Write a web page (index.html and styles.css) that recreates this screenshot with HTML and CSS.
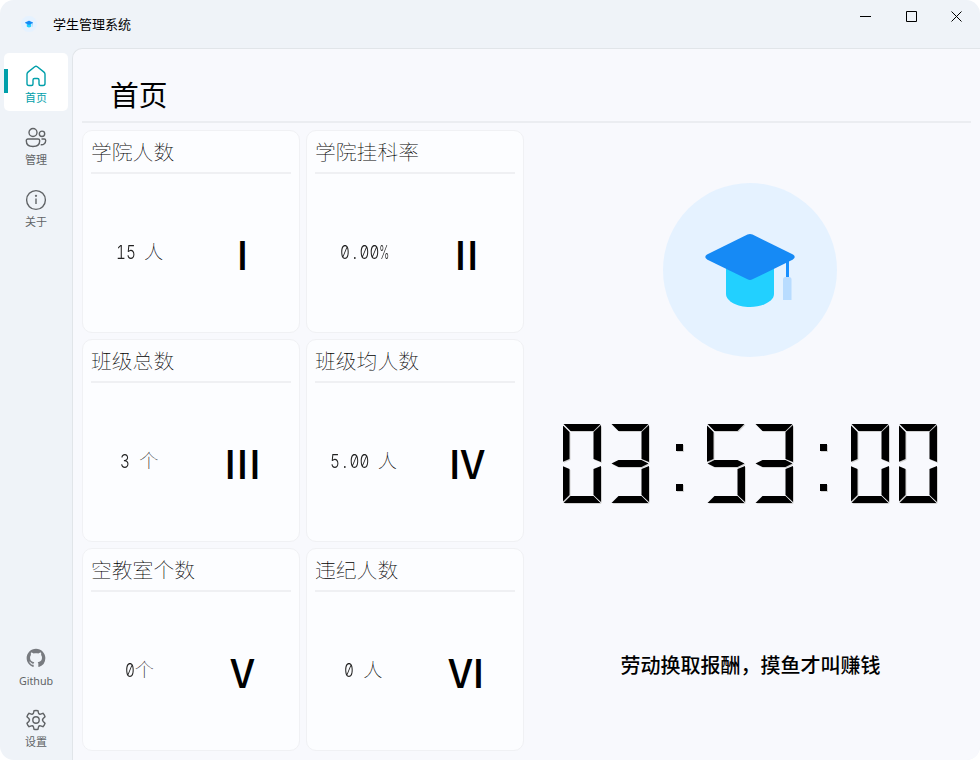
FILE: index.html
```
<!DOCTYPE html>
<html lang="zh-CN">
<head>
<meta charset="utf-8">
<title>学生管理系统</title>
<link rel="stylesheet" href="styles.css">
</head>
<body>
<svg width="0" height="0" class="defs" aria-hidden="true">
  <symbol id="cap" viewBox="0 0 174 174">
    <circle cx="87" cy="87" r="87" fill="#e5f2ff"/>
    <path d="M63 70h48v41c0 7-11 13-24 13s-24-6-24-13z" fill="#22d0ff"/>
    <path d="M123 70h3v28h-3z" fill="#1890ff"/>
    <path d="M122.500 94h3.500q2.500 0 2.500 2.500V117h-8.500V96.500q0-2.500 2.500-2.500z" fill="#b8dcff"/>
    <path d="M84.500 51.500q2.500-1.200 5 0L129.500 71.300q4.500 2.700 0 5.400L89.500 96.300q-2.500 1.200-5 0L44.500 76.700q-4.500-2.700 0-5.400z" fill="#168af5"/>
  </symbol>
</svg>
<div class="window">
  <header class="titlebar">
    <svg class="logo"><use href="#cap"/></svg>
    <span class="app-name">学生管理系统</span>
    <div class="controls">
      <svg viewBox="0 0 12 12"><path d="M0 6.500h11"/></svg>
      <svg viewBox="0 0 12 12"><path d="M.5 1.500h10v10H.5z"/></svg>
      <svg viewBox="0 0 12 12"><path d="M.5 1.500l10 10M10.500 1.500l-10 10"/></svg>
    </div>
  </header>
  <nav class="sidebar">
    <a class="item active"><svg viewBox="0 0 22 22"><path d="M2 9.200c0-.9.400-1.600 1-2.100l6.700-5.400q1.300-1 2.600 0L19 7.100c.6.500 1 1.200 1 2.100v9.300q0 2-2 2h-2.500q-1.500 0-1.500-1.500v-4q0-1.500-1.500-1.500h-3Q8 13.500 8 15v4q0 1.500-1.500 1.500H4q-2 0-2-2z"/></svg><span>首页</span></a>
    <a class="item"><svg viewBox="0 0 22 22"><circle cx="8" cy="5.500" r="4"/><circle cx="17" cy="6.800" r="2.700"/><path d="M3 12h10q1.700 0 1.700 1.700c0 3.900-2.600 5.800-6.700 5.800s-6.700-1.900-6.700-5.800Q1.300 12 3 12zM16.500 12h2.700q1.500 0 1.500 1.500c0 2.900-2 4.500-5 4.300"/></svg><span>管理</span></a>
    <a class="item"><svg viewBox="0 0 22 22"><circle cx="11" cy="11" r="9.400"/><path d="M11 9.500V15"/><circle cx="11" cy="6.800" r=".45"/></svg><span>关于</span></a>
    <a class="item push"><svg viewBox="-1.400 -1.400 18.800 18.800"><path class="solid" d="M8 0C3.580 0 0 3.580 0 8c0 3.540 2.290 6.530 5.470 7.590.4.070.55-.17.55-.38 0-.19-.01-.82-.01-1.490-2.010.37-2.530-.49-2.690-.94-.09-.23-.48-.94-.82-1.130-.28-.15-.68-.52-.01-.53.63-.01 1.080.58 1.230.82.720 1.210 1.870.87 2.330.66.070-.52.280-.87.510-1.070-1.780-.2-3.640-.89-3.640-3.950 0-.87.310-1.590.82-2.150-.08-.2-.36-1.020.08-2.120 0 0 .67-.21 2.200.82.640-.18 1.320-.27 2-.27s1.360.09 2 .27c1.530-1.040 2.200-.82 2.200-.82.440 1.100.16 1.920.08 2.120.51.560.82 1.270.82 2.150 0 3.070-1.870 3.750-3.650 3.950.29.250.54.730.54 1.480 0 1.070-.01 1.930-.01 2.200 0 .21.150.46.550.38A8.010 8.010 0 0 0 16 8c0-4.420-3.580-8-8-8z"/></svg><span>Github</span></a>
    <a class="item"><svg viewBox="0 0 22 22"><circle cx="11" cy="11" r="3.200"/><path d="M9 1.800q2-.5 4 0l.6 2.500q.5 1.300 2 .8l2.400-.8q1.500 1.600 2 3.500L18.200 9.600q-1.400 1.400 0 2.800L20 14.200q-.5 1.900-2 3.500l-2.400-.8q-1.500-.5-2 .8l-.6 2.500q-2 .5-4 0l-.6-2.500q-.5-1.300-2-.8l-2.400.8q-1.500-1.600-2-3.500l1.800-1.800q1.400-1.400 0-2.800L2 7.800q.5-1.900 2-3.500l2.400.8q1.500.5 2-.8z"/></svg><span>设置</span></a>
  </nav>
  <main class="content">
    <h1>首页</h1>
    <div class="body">
      <section class="cards">
        <article class="card"><h2>学院人数</h2><div class="row"><div class="value"><span class="num" style="--n:2">15</span> 人</div><div class="roman">I</div></div></article>
        <article class="card"><h2>学院挂科率</h2><div class="row"><div class="value"><span class="num" style="--n:5">0<i>.</i>00<b>%</b></span></div><div class="roman">II</div></div></article>
        <article class="card"><h2>班级总数</h2><div class="row"><div class="value"><span class="num" style="--n:1">3</span> 个</div><div class="roman">III</div></div></article>
        <article class="card"><h2>班级均人数</h2><div class="row"><div class="value"><span class="num" style="--n:4">5<i>.</i>00</span> 人</div><div class="roman">IV</div></div></article>
        <article class="card"><h2>空教室个数</h2><div class="row"><div class="value"><span class="num" style="--n:1">0</span>个</div><div class="roman">V</div></div></article>
        <article class="card"><h2>违纪人数</h2><div class="row"><div class="value"><span class="num" style="--n:1">0</span> 人</div><div class="roman">VI</div></div></article>
      </section>
      <section class="side">
        <svg class="hero"><use href="#cap"/></svg>
        <div class="clock" role="img" aria-label="03:53:00">
          <div class="digit"><i class="a"></i><i class="b"></i><i class="c"></i><i class="d"></i><i class="e"></i><i class="f"></i></div>
          <div class="digit"><i class="a"></i><i class="b"></i><i class="c"></i><i class="d"></i><i class="g"></i></div>
          <div class="colon"><i></i><i></i></div>
          <div class="digit"><i class="a"></i><i class="c"></i><i class="d"></i><i class="f"></i><i class="g"></i></div>
          <div class="digit"><i class="a"></i><i class="b"></i><i class="c"></i><i class="d"></i><i class="g"></i></div>
          <div class="colon"><i></i><i></i></div>
          <div class="digit"><i class="a"></i><i class="b"></i><i class="c"></i><i class="d"></i><i class="e"></i><i class="f"></i></div>
          <div class="digit"><i class="a"></i><i class="b"></i><i class="c"></i><i class="d"></i><i class="e"></i><i class="f"></i></div>
        </div>
        <p class="motto">劳动换取报酬，摸鱼才叫赚钱</p>
      </section>
    </div>
  </main>
</div>
</body>
</html>
```
FILE: styles.css
```
* { box-sizing: border-box; }
body { margin: 0; background: #fff; font-family: "Noto Sans", "Noto Sans CJK SC", sans-serif; color: #000; }
.defs { display: block; }
.window {
  width: 980px; height: 760px; border-radius: 14px; overflow: hidden; background: #eff3f8;
  display: grid; grid-template: 48px 1fr / 72px 1fr;
}
.titlebar { grid-column: 1 / -1; display: flex; align-items: center; padding-left: 21px; }
.logo { width: 16px; height: 16px; margin-right: 16px; }
.app-name { font: 13px/20px "Noto Sans CJK SC", sans-serif; }
.controls { display: flex; gap: 33px; margin: -16px 17px 0 auto; }
.controls svg { width: 12px; height: 12px; fill: none; stroke: #000; }
.controls svg:first-child { margin-right: 1px; }
.sidebar { display: flex; flex-direction: column; gap: 4px; padding: 5px 4px 5px; }
.item {
  width: 64px; height: 58px; padding-top: 12px; border-radius: 5px; color: #606366;
  display: flex; flex-direction: column; align-items: center; font: 11px/16px "Noto Sans CJK SC", sans-serif;
}
.item svg { width: 22px; height: 22px; fill: none; stroke: currentColor; stroke-width: 1.400; margin-bottom: 2px; }
.item .solid { fill: #787b80; stroke: none; }
.item.active { background: linear-gradient(#009faa, #009faa) 0 16px / 4px 24px no-repeat, #fff; color: #009faa; }
.push { margin-top: auto; }
.push span { font-family: "Noto Sans", sans-serif; font-size: 10.700px; padding-top: 2px; }
.content { background: #f8f9fd; border: 1px solid #e1e5e9; border-width: 1px 0 0 1px; border-top-left-radius: 10px; padding: 22px 9px 0; }
h1 { margin: 0; height: 52px; padding-left: 28px; font: 28.800px/46px "Noto Sans CJK SC", sans-serif; border-bottom: 2px solid #ebedf1; }
.body { display: grid; grid-template-columns: 442px 1fr; padding-top: 7px; }
.cards { display: grid; grid-template-columns: 218px 218px; grid-auto-rows: 203px; gap: 6px; }
.card { border: 1px solid #f0f1f4; border-radius: 10px; background: #fcfdff; padding: 0 8px; }
h2 { margin: 0; height: 43px; border-bottom: 2px solid #eff0f3; font: 100 20.800px/41px "Noto Sans CJK SC", sans-serif; color: #000; }
.row { display: flex; height: 154px; align-items: center; }
.value { flex: none; width: 97px; text-align: center; font: 100 19.200px/28px "Noto Sans CJK SC", sans-serif; color: #000; white-space: pre; word-spacing: 5px; }
.num {
  display: inline-block; width: calc(var(--n) * 9.600px); text-align: left;
  font: 300 19.200px/28px Inter, sans-serif; font-feature-settings: "tnum", "zero";
  transform: scaleX(.8); transform-origin: left; color: #222;
}
.num i, .num b { display: inline-block; width: 12px; text-align: center; font-style: normal; font-weight: inherit; }
.num b { text-align: left; transform: scaleX(.7); transform-origin: left; }
.roman { flex: none; width: 97px; margin: 3px 0 0 6px; text-align: center; font: 500 40px/48px "Noto Sans CJK SC", sans-serif; }
.side { display: flex; flex-direction: column; align-items: center; padding: 53px 0 0 5px; }
.hero { width: 174px; height: 174px; }
.clock { display: flex; margin: 67px 0 0 9px; width: 384px; height: 80px; filter: drop-shadow(1px 1px 0 #d2d2d2); }
.digit { display: grid; width: 39px; margin-right: 9px; flex: none; }
.digit i { grid-area: 1 / 1; background: #000; }
.a { clip-path: polygon(1px 0, 38px 0, 31px 7px, 8px 7px); }
.b { clip-path: polygon(38.500px 1px, 38.500px 38px, 31px 35px, 31px 8px); }
.c { clip-path: polygon(38.500px 42px, 38.500px 78px, 31px 71px, 31px 45px); }
.d { clip-path: polygon(1px 79px, 8px 72px, 31px 72px, 38px 79px); }
.e { clip-path: polygon(0 42px, 7px 45px, 7px 71px, 0 78px); }
.f { clip-path: polygon(0 1px, 7px 8px, 7px 35px, 0 38px); }
.g { clip-path: polygon(1px 39.500px, 8px 36px, 31px 36px, 38px 39.500px, 31px 43px, 8px 43px); }
.colon { width: 48px; display: flex; flex-direction: column; gap: 33px; padding: 20px 0 0 17px; flex: none; }
.colon i { width: 7px; height: 7px; background: #000; }
.motto { margin: 147px 0 0 1px; font: 500 20px/28px "Noto Sans CJK SC", sans-serif; }
```
